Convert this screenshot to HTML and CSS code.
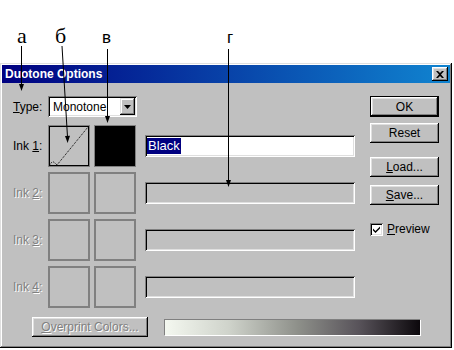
FILE: index.html
```html
<!DOCTYPE html>
<html lang="ru">
<head>
  <meta charset="UTF-8" />
  <title>Duotone Options</title>
  <link rel="stylesheet" href="styles.css">
</head>
<body>
  <div class="figure">
    <div class="figure-head"></div>

    <div class="dialog">
      <div class="titlebar">
        <span class="title">Duotone Options</span>
        <span class="close-btn">
          <svg width="8" height="7" viewBox="0 0 8 7"><path d="M0 0h2l2 2 2-2h2L5 3.5 8 7H6L4 5 2 7H0l3-3.5z" fill="#000"/></svg>
        </span>
      </div>

      <div class="dialog-body">
        <div class="upper">
          <div class="main-col">
            <div class="type-row">
              <span class="lbl"><u>T</u>ype:</span>
              <div class="combo">
                <span class="combo-value">Monotone</span>
                <span class="combo-arrow">
                  <svg width="7" height="4" viewBox="0 0 7 4"><path d="M0 0h7L3.5 4z" fill="#000"/></svg>
                </span>
              </div>
            </div>

            <div class="inks">
              <div class="ink-row">
                <span class="lbl">Ink <u>1</u>:</span>
                <div class="swatch curve">
                  <svg width="40" height="40" viewBox="0 0 40 40">
                    <path d="M1 38.5 L2.5 36.5 L4.5 36 L6.5 37.5 L8 39 L39 1" fill="none" stroke="#000" stroke-width="1" stroke-dasharray="1 1"/>
                  </svg>
                </div>
                <div class="swatch ink-color"></div>
                <div class="field"><span class="sel">Black</span></div>
              </div>
              <div class="ink-row off">
                <span class="lbl">Ink <u>2</u>:</span>
                <div class="swatch"></div>
                <div class="swatch"></div>
                <div class="field blank"></div>
              </div>
              <div class="ink-row off">
                <span class="lbl">Ink <u>3</u>:</span>
                <div class="swatch"></div>
                <div class="swatch"></div>
                <div class="field blank"></div>
              </div>
              <div class="ink-row off">
                <span class="lbl">Ink <u>4</u>:</span>
                <div class="swatch"></div>
                <div class="swatch"></div>
                <div class="field blank"></div>
              </div>
            </div>
          </div>

          <div class="side-col">
            <button class="btn default">OK</button>
            <button class="btn reset">Reset</button>
            <button class="btn load"><u>L</u>oad...</button>
            <button class="btn save"><u>S</u>ave...</button>
            <label class="check">
              <span class="check-box">
                <svg width="9" height="9" viewBox="0 0 9 9"><path d="M1 3.5 L3.5 6 L8 1.5 V3.5 L3.5 8 L1 5.5z" fill="#000"/></svg>
              </span>
              <span><u>P</u>review</span>
            </label>
          </div>
        </div>

        <div class="bottom-row">
          <button class="btn overprint" disabled><u>O</u>verprint Colors...</button>
          <div class="ramp"></div>
        </div>
      </div>
    </div>

    <!-- callout letters and arrows over the screenshot -->
    <svg class="callouts" width="454" height="350" viewBox="0 0 454 350">
      <text x="17" y="43" class="serif">а</text>
      <text x="55" y="43" class="serif">б</text>
      <text x="102" y="43" class="sans">в</text>
      <text x="227" y="43" class="sans">г</text>
      <g stroke="#000" stroke-width="1">
        <line x1="21.5" y1="46" x2="21.5" y2="85"/>
        <line x1="62" y1="46" x2="67.5" y2="137"/>
        <line x1="107.5" y1="49" x2="107.5" y2="116"/>
        <line x1="228.5" y1="49" x2="228.5" y2="180"/>
      </g>
      <g fill="#000">
        <path d="M19 84h5l-2.5 7z"/>
        <path d="M65 136l5-.3-2.4 7.3z"/>
        <path d="M105 116h5l-2.5 7z"/>
        <path d="M226 180h5l-2.5 7z"/>
      </g>
    </svg>
  </div>
</body>
</html>
```

FILE: styles.css
```css
body {
  margin: 0;
  background: #fff;
  font-family: "Liberation Sans", Arial, sans-serif;
  font-size: 12px;
  color: #000;
}
.figure {
  position: relative;
  width: 454px;
  height: 350px;
}
.figure-head {
  height: 63px;
}
.dialog {
  width: 452px;
  height: 285px;
  box-sizing: border-box;
  padding: 2px;
  background: #c0c0c0;
  box-shadow: inset -1px -1px #000, inset 1px 1px #dfdfdf,
              inset -2px -2px #808080, inset 2px 2px #fff;
}
.titlebar {
  height: 18px;
  display: flex;
  align-items: center;
  justify-content: space-between;
  padding: 0 2px 0 3px;
  background: linear-gradient(90deg, #000080, #1084d0);
  color: #fff;
  font-weight: bold;
  font-size: 12px;
}
.close-btn {
  width: 16px;
  height: 14px;
  box-sizing: border-box;
  display: flex;
  align-items: center;
  justify-content: center;
  background: #c0c0c0;
  box-shadow: inset -1px -1px #000, inset 1px 1px #fff,
              inset -2px -2px #808080, inset 2px 2px #dfdfdf;
}
.dialog-body {
  padding: 13px 0 0 11px;
}
.upper {
  display: flex;
}
.main-col {
  width: 342px;
}
.lbl {
  width: 35px;
  flex: none;
}
.type-row {
  display: flex;
  align-items: center;
  height: 21px;
}
.combo {
  width: 89px;
  height: 21px;
  box-sizing: border-box;
  display: flex;
  align-items: center;
  justify-content: space-between;
  padding: 2px 2px 2px 5px;
  background: #fff;
  box-shadow: inset 1px 1px #808080, inset -1px -1px #fff,
              inset 2px 2px #000, inset -2px -2px #dfdfdf;
}
.combo-arrow {
  width: 15px;
  height: 17px;
  box-sizing: border-box;
  display: flex;
  align-items: center;
  justify-content: center;
  background: #c0c0c0;
  box-shadow: inset -1px -1px #000, inset 1px 1px #dfdfdf,
              inset -2px -2px #808080, inset 2px 2px #fff;
}
.inks {
  margin-top: 8px;
  display: flex;
  flex-direction: column;
  gap: 5px;
}
.ink-row {
  display: flex;
  align-items: center;
  height: 42px;
}
.swatch {
  width: 42px;
  height: 42px;
  flex: none;
  box-sizing: border-box;
  border: 2px solid #808080;
}
.swatch + .swatch {
  margin-left: 4px;
}
.swatch.curve {
  border: 1px solid #808080;
  box-shadow: inset 0 0 0 1px #000;
}
.swatch.curve svg {
  display: block;
}
.swatch.ink-color {
  border: 1px solid #808080;
  background: #000;
}
.field {
  margin-left: 9px;
  width: 210px;
  height: 22px;
  flex: none;
  box-sizing: border-box;
  padding: 3px 2px;
  background: #fff;
  box-shadow: inset 1px 1px #808080, inset -1px -1px #fff,
              inset 2px 2px #000, inset -2px -2px #dfdfdf;
}
.field.blank {
  background: #c0c0c0;
}
.sel {
  display: inline-block;
  padding: 1px 1px;
  background: #000080;
  color: #fff;
  font-size: 13px;
  line-height: 14px;
}
.off .lbl,
.btn:disabled {
  color: #808080;
  text-shadow: 1px 1px #fff;
}
.bottom-row {
  margin-top: 9px;
  display: flex;
  align-items: center;
  padding-left: 19px;
}
.btn {
  display: block;
  width: 69px;
  height: 20px;
  flex: none;
  padding: 0;
  border: 0;
  font: inherit;
  color: #000;
  white-space: nowrap;
  background: #c0c0c0;
  box-shadow: inset -1px -1px #000, inset 1px 1px #fff,
              inset -2px -2px #808080, inset 2px 2px #dfdfdf;
}
.btn.overprint {
  width: 116px;
}
.btn.default {
  height: 21px;
  border: 1px solid #000;
}
.ramp {
  margin-left: 16px;
  width: 257px;
  height: 17px;
  flex: none;
  box-sizing: border-box;
  border-top: 1px solid #808080;
  border-left: 1px solid #808080;
  border-right: 1px solid #fff;
  border-bottom: 1px solid #fff;
  background: linear-gradient(90deg, #f4f8f0 0%, #cfd3cb 25%, #8e908a 52%, #58535a 76%, #0c080c 100%);
}
.side-col {
  margin-left: 15px;
  width: 69px;
}
.btn.reset {
  margin-top: 6px;
}
.btn.load {
  margin-top: 14px;
}
.btn.save {
  margin-top: 8px;
}
.check {
  margin-top: 17px;
  display: flex;
  align-items: center;
  gap: 4px;
}
.check-box {
  width: 13px;
  height: 13px;
  box-sizing: border-box;
  display: flex;
  align-items: center;
  justify-content: center;
  background: #fff;
  box-shadow: inset 1px 1px #808080, inset -1px -1px #fff,
              inset 2px 2px #000, inset -2px -2px #dfdfdf;
}
.callouts {
  position: absolute;
  top: 0;
  left: 0;
  pointer-events: none;
}
.callouts .serif {
  font-family: "Liberation Serif", serif;
  font-size: 22px;
}
.callouts .sans {
  font-family: "Liberation Sans", sans-serif;
  font-size: 17px;
}
```
